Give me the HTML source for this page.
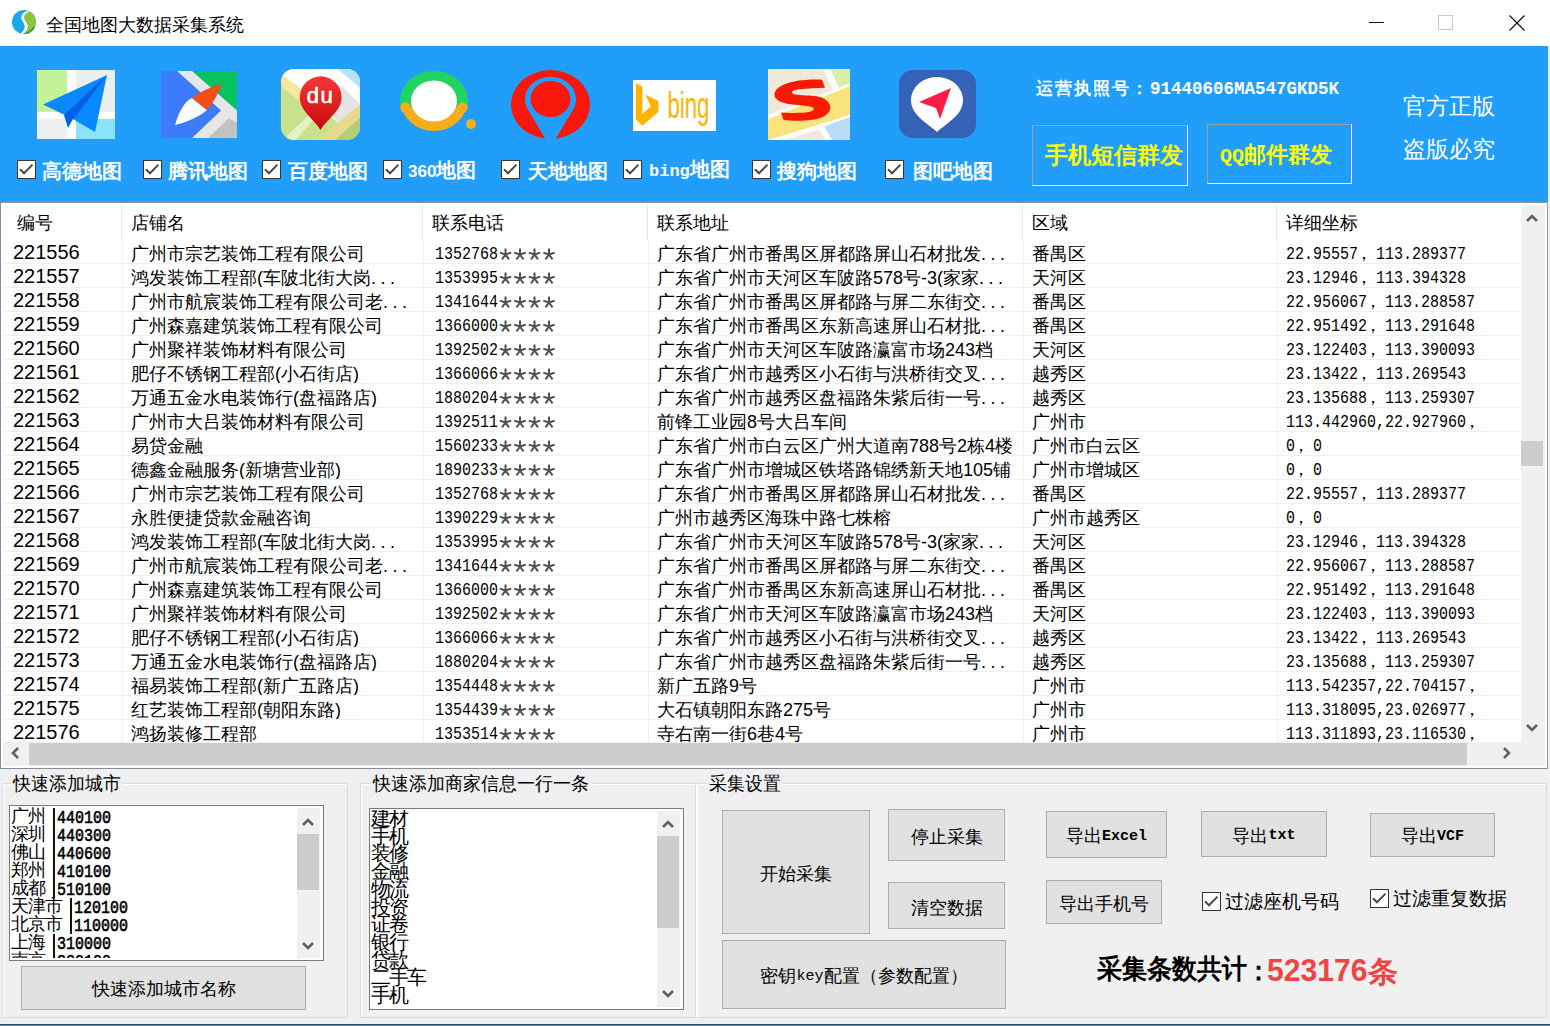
<!DOCTYPE html><html><head><meta charset="utf-8"><style>
*{margin:0;padding:0;box-sizing:content-box}
html,body{width:1550px;height:1026px;overflow:hidden;background:#f0f0f0}
body{position:relative;font-family:"Liberation Sans",sans-serif;color:#000}
.a{position:absolute;white-space:nowrap}
.cb{position:absolute}
.cb svg{position:absolute;left:0;top:0}
.lbl{position:absolute;white-space:nowrap;color:#fff;font-weight:bold;font-size:20px;line-height:22px}
.btn{position:absolute;background:#e1e1e1;border:1px solid #adadad;box-sizing:border-box;display:flex;align-items:center;justify-content:center;font-size:18px;white-space:nowrap}
.gb{position:absolute;border:1px solid #dcdcdc;box-sizing:border-box;box-shadow:inset 1px 1px 0 #fff}
.gbl{position:absolute;background:#f0f0f0;font-size:18px;line-height:20px;transform:scaleY(1.06);transform-origin:0 100%;padding:0 2px;white-space:nowrap}
.cell{position:absolute;white-space:nowrap;font-size:18px;line-height:24px;height:24px;overflow:hidden}
.mono{font-family:"Liberation Mono",monospace}
.mn{font-family:"Liberation Mono",monospace;font-size:15px;display:inline-block;transform:scaleY(1.2);transform-origin:50% 60%}
</style></head><body>
<div class="a" style="left:0;top:0;width:1550px;height:46px;background:#fff"></div>
<svg class="a" style="left:11px;top:9px" width="26" height="26" viewBox="0 0 26 26">
<defs><clipPath id="cc"><circle cx="13" cy="13" r="12"/></clipPath></defs>
<g clip-path="url(#cc)"><rect x="0" y="0" width="26" height="26" fill="#17a9e6"/>
<path d="M13 0 L26 0 L26 26 L8 26 C16 22 17 18 14 14 C11 10 12 4 18 1 Z" fill="#8bc53f"/>
<path d="M16 2 C10 4 9 9 12 13 C15 17 14 21 9 25 L12 25 C17 21 18 17 15 13 C12 9 12 5 19 2 Z" fill="#fff"/>
<path d="M9 25.5 C14 25 20 22 23 17 L26 26 Z" fill="#2e9a3c"/></g></svg>
<div class="a" style="left:46px;top:13px;font-size:18px;line-height:24px">全国地图大数据采集系统</div>
<div class="a" style="left:1369px;top:22px;width:15px;height:1px;background:#111"></div>
<div class="a" style="left:1438px;top:15px;width:13px;height:13px;border:1px solid #c8c8c8"></div>
<svg class="a" style="left:1509px;top:15px" width="16" height="16" viewBox="0 0 16 16"><path d="M0.5 0.5 L15.5 15.5 M15.5 0.5 L0.5 15.5" stroke="#111" stroke-width="1.2"/></svg>
<div class="a" style="left:0;top:46px;width:1548px;height:156px;background:#219efa"></div>
<div class="a" style="left:1548px;top:46px;width:2px;height:156px;background:#e8e8e8"></div>
<svg class="a" style="left:37px;top:70px" width="78" height="69" viewBox="0 0 78 69">
<rect width="78" height="69" fill="#e9eff0"/>
<rect x="0" y="0" width="30" height="42" fill="#c4f299"/>
<rect x="30" y="0" width="9" height="69" fill="#fbfdfd"/>
<rect x="0" y="42" width="78" height="7" fill="#fbfdfd"/>
<rect x="39" y="49" width="39" height="20" fill="#89e3fd"/>
<rect x="0" y="49" width="30" height="20" fill="#edf1f2"/>
<polygon points="6,34.5 70,5 58,62 36,49" fill="#0a88ff"/>
<polygon points="27,45 70,5 36,49 31,58" fill="#0660e6"/>
<polygon points="36,49 70,5 40,46" fill="#0a72f5"/>
</svg>
<svg class="a" style="left:161px;top:71px" width="76" height="67" viewBox="0 0 76 67">
<rect width="76" height="67" fill="#3c7cfb"/>
<polygon points="31,0 76,0 76,39.4" fill="#07c35f"/>
<polygon points="16,0 31,0 76,39.4 76,67 31,67 60,39.4" fill="#e6e6e6"/>
<polygon points="47,67 67.8,47.2 76,51.5 76,67" fill="#c2c2c2"/>
<path d="M14,54 C18,40 24,30 31,27 L46,39 C38,46 26,51 14,54 Z" fill="#fff"/>
<path d="M31,27 C40,20 52,15 61,13 C56,24 52,33 46,39 Z" fill="#f54d17"/>
</svg>
<svg class="a" style="left:281px;top:69px" width="79" height="71" viewBox="0 0 79 71">
<defs><clipPath id="bd"><rect width="79" height="71" rx="13"/></clipPath>
<linearGradient id="pin" x1="0" y1="0" x2="0" y2="1"><stop offset="0" stop-color="#f5373a"/><stop offset="1" stop-color="#c90a0a"/></linearGradient></defs>
<g clip-path="url(#bd)">
<rect width="79" height="71" fill="#c7e28b"/>
<polygon points="0,0 79,0 79,36 57,54 48.5,46.3 48.5,40.8 1.9,6.8 0,6.8" fill="#fff"/>
<polygon points="57,0 79,0 79,18.7" fill="#b4e3f9"/>
<polygon points="61,17 79,35.3 57.1,53.8 43,36" fill="#e4e4e4"/>
<polygon points="0,6.8 1.9,6.8 48.5,40.8 33.5,45.5 0,17.1" fill="#f5e79b"/>
<polygon points="79,35.3 79,48.7 54,71 37,71 57.1,53.8" fill="#e9d98b"/>
<polygon points="79,48.7 79,71 54,71" fill="#b2ce7b"/>
<polygon points="6.6,66 28,46.3 31.9,51.8 14.5,71 6,71" fill="#e2f1c6"/>
</g>
<path d="M39.5,61 C33,50 18.8,42 18.8,28.2 A20.9,20.9 0 0 1 60.6,28.2 C60.6,42 46,50 39.5,61 Z" fill="url(#pin)"/>
<text x="39.5" y="34" text-anchor="middle" font-family="Liberation Sans" font-size="22" letter-spacing="1.5" fill="#fff" stroke="#fff" stroke-width="0.6">du</text>
</svg>
<svg class="a" style="left:398px;top:69px" width="82" height="66" viewBox="0 0 82 66">
<defs><clipPath id="top"><rect x="0" y="0" width="82" height="38"/></clipPath><clipPath id="bot"><rect x="0" y="38" width="82" height="40"/></clipPath></defs>
<ellipse cx="36" cy="32" rx="34" ry="30" fill="#21d35f" clip-path="url(#top)"/>
<ellipse cx="36" cy="32" rx="33" ry="30" fill="#f5ad1a" clip-path="url(#bot)"/>
<circle cx="7.5" cy="38.5" r="5.2" fill="#f5ad1a"/>
<circle cx="64.5" cy="38.5" r="5.2" fill="#f5ad1a"/>
<ellipse cx="36" cy="32" rx="23" ry="20.5" fill="#fff"/>
<circle cx="73" cy="55" r="5" fill="#f5ad1a"/>
</svg>
<svg class="a" style="left:511px;top:70px" width="80" height="70" viewBox="0 0 80 70">
<ellipse cx="39.5" cy="34.5" rx="39.5" ry="34.5" fill="#f8170a"/>
<path d="M35,70 L16,38 A25.5,22.5 0 1 1 63,38 L44,70 Z" fill="#219efa"/>
<ellipse cx="39.5" cy="29" rx="20" ry="18" fill="#f8170a"/>
</svg>
<svg class="a" style="left:633px;top:80px" width="83" height="51" viewBox="0 0 83 51">
<rect width="83" height="51" fill="#fff"/>
<polygon points="2.8,3.1 9.3,6.5 9.3,34.1 17.8,26.3 12.4,14.7 25.5,20.9 25.5,31.8 9.3,45.7 2.8,39.5" fill="#ffb400"/>
<text x="34.5" y="38.5" font-family="Liberation Sans" font-size="37" fill="#ffb400" transform="translate(34.5 0) scale(0.6 1) translate(-34.5 0)">bing</text>
</svg>
<svg class="a" style="left:768px;top:69px" width="82" height="71" viewBox="0 0 82 71">
<rect width="82" height="71" fill="#efe9d9"/>
<polygon points="58,0 82,0 82,16 70,22" fill="#d7eeae"/>
<polygon points="0,50 82,17 82,46 0,71" fill="#f9e47c"/>
<polygon points="0,50 82,17 82,14 0,46" fill="#fff"/>
<polygon points="0,71 82,46 82,50 18,71" fill="#fff"/>
<polygon points="55,0 62,0 72,20 66,23" fill="#fff"/>
<polygon points="52,59 82,48 82,71 62,71" fill="#bbdcf6"/>
<polygon points="50,59 56,57 64,71 58,71" fill="#fff"/>
<path d="M54,10.8 C36,9.5 13,13 7.5,22 C3,31 14,35 30,36 C44,37 50,39 43,42.5 C35,44.5 20,44 13,43.5 L15.5,50.8 C28,53 50,52 58,46 C65,41 64,32 52,28 C44,26 32,26.5 27,25.5 C22,24 23,21 31,20.2 C40,19.5 50,19 57,18.7 Z" fill="#f81a06"/>
</svg>
<svg class="a" style="left:899px;top:70px" width="77" height="68" viewBox="0 0 77 68">
<rect width="77" height="68" rx="14" fill="#3462b6"/>
<path d="M38,62 C30,54 12,46 12,30 A26,23 0 0 1 64,30 C64,46 46,54 38,62 Z" fill="#fff"/>
<polygon points="20,32 52,18 41,49 37,38" fill="#fe1b48"/>
</svg>
<div class="cb" style="left:17px;top:160px;width:19px;height:19px;box-sizing:border-box;border:1.5px solid #363636;background:#fff"></div><svg class="a" style="left:17px;top:160px" width="19" height="19" viewBox="0 0 19 19"><path d="M3 9.2 L7 13.3 L15.5 4.6" fill="none" stroke="#4a4a4a" stroke-width="2"/></svg>
<div class="lbl" style="left:42px;top:160px">高德地图</div>
<div class="cb" style="left:143px;top:160px;width:19px;height:19px;box-sizing:border-box;border:1.5px solid #363636;background:#fff"></div><svg class="a" style="left:143px;top:160px" width="19" height="19" viewBox="0 0 19 19"><path d="M3 9.2 L7 13.3 L15.5 4.6" fill="none" stroke="#4a4a4a" stroke-width="2"/></svg>
<div class="lbl" style="left:168px;top:160px">腾讯地图</div>
<div class="cb" style="left:262px;top:160px;width:19px;height:19px;box-sizing:border-box;border:1.5px solid #363636;background:#fff"></div><svg class="a" style="left:262px;top:160px" width="19" height="19" viewBox="0 0 19 19"><path d="M3 9.2 L7 13.3 L15.5 4.6" fill="none" stroke="#4a4a4a" stroke-width="2"/></svg>
<div class="lbl" style="left:288px;top:160px">百度地图</div>
<div class="cb" style="left:383px;top:160px;width:19px;height:19px;box-sizing:border-box;border:1.5px solid #363636;background:#fff"></div><svg class="a" style="left:383px;top:160px" width="19" height="19" viewBox="0 0 19 19"><path d="M3 9.2 L7 13.3 L15.5 4.6" fill="none" stroke="#4a4a4a" stroke-width="2"/></svg>
<div class="lbl" style="left:408px;top:159px"><span style="font-size:17px">360</span>地图</div>
<div class="cb" style="left:501px;top:160px;width:19px;height:19px;box-sizing:border-box;border:1.5px solid #363636;background:#fff"></div><svg class="a" style="left:501px;top:160px" width="19" height="19" viewBox="0 0 19 19"><path d="M3 9.2 L7 13.3 L15.5 4.6" fill="none" stroke="#4a4a4a" stroke-width="2"/></svg>
<div class="lbl" style="left:528px;top:160px">天地地图</div>
<div class="cb" style="left:623px;top:160px;width:19px;height:19px;box-sizing:border-box;border:1.5px solid #363636;background:#fff"></div><svg class="a" style="left:623px;top:160px" width="19" height="19" viewBox="0 0 19 19"><path d="M3 9.2 L7 13.3 L15.5 4.6" fill="none" stroke="#4a4a4a" stroke-width="2"/></svg>
<div class="lbl" style="left:649px;top:158px"><span class="mono" style="font-size:17px">bing</span>地图</div>
<div class="cb" style="left:752px;top:160px;width:19px;height:19px;box-sizing:border-box;border:1.5px solid #363636;background:#fff"></div><svg class="a" style="left:752px;top:160px" width="19" height="19" viewBox="0 0 19 19"><path d="M3 9.2 L7 13.3 L15.5 4.6" fill="none" stroke="#4a4a4a" stroke-width="2"/></svg>
<div class="lbl" style="left:777px;top:160px">搜狗地图</div>
<div class="cb" style="left:885px;top:160px;width:19px;height:19px;box-sizing:border-box;border:1.5px solid #363636;background:#fff"></div><svg class="a" style="left:885px;top:160px" width="19" height="19" viewBox="0 0 19 19"><path d="M3 9.2 L7 13.3 L15.5 4.6" fill="none" stroke="#4a4a4a" stroke-width="2"/></svg>
<div class="lbl" style="left:913px;top:160px">图吧地图</div>
<div class="a" style="left:1036px;top:78px;color:#fff;font-weight:bold;font-size:17px;line-height:22px;letter-spacing:2px">运营执照号：<span class="mono" style="font-size:17.5px;letter-spacing:0">91440606MA547GKD5K</span></div>
<div class="a" style="left:1032px;top:125px;width:156px;height:61px;border-top:1.5px solid #a0a0a0;border-left:1.5px solid #a0a0a0;border-right:1.5px solid #fff;border-bottom:1.5px solid #fff;box-sizing:border-box"></div>
<div class="a" style="left:1045px;top:142px;color:#ffff00;font-weight:bold;font-size:22.5px;line-height:28px">手机短信群发</div>
<div class="a" style="left:1207px;top:124px;width:145px;height:60px;border-top:1.5px solid #a0a0a0;border-left:1.5px solid #a0a0a0;border-right:1.5px solid #fff;border-bottom:1.5px solid #fff;box-sizing:border-box"></div>
<div class="a" style="left:1220px;top:141px;color:#ffff00;font-weight:bold;font-size:22px;line-height:28px"><span class="mono" style="font-size:20px">QQ</span>邮件群发</div>
<div class="a" style="left:1403px;top:92px;color:#fff;font-size:23px;line-height:28px">官方正版</div>
<div class="a" style="left:1403px;top:135px;color:#fff;font-size:23px;line-height:28px">盗版必究</div>
<div class="a" style="left:0;top:202px;width:1548px;height:567px;background:#fff;border-top:1px solid #8f96a0;border-left:1.5px solid #858c97;border-right:1.5px solid #8f96a0;border-bottom:1.5px solid #858c97;box-sizing:border-box"></div>
<div class="cell" style="left:17px;top:211px">编号</div>
<div class="cell" style="left:131px;top:211px">店铺名</div>
<div class="cell" style="left:432px;top:211px">联系电话</div>
<div class="cell" style="left:657px;top:211px">联系地址</div>
<div class="cell" style="left:1032px;top:211px">区域</div>
<div class="cell" style="left:1286px;top:211px">详细坐标</div>
<div class="a" style="left:121px;top:205px;width:1px;height:35px;background:#e5e5e5"></div>
<div class="a" style="left:422px;top:205px;width:1px;height:35px;background:#e5e5e5"></div>
<div class="a" style="left:647px;top:205px;width:1px;height:35px;background:#e5e5e5"></div>
<div class="a" style="left:1022px;top:205px;width:1px;height:35px;background:#e5e5e5"></div>
<div class="a" style="left:1276px;top:205px;width:1px;height:35px;background:#e5e5e5"></div>
<div class="cell" style="left:13px;top:240px;font-size:20px;height:24px">221556</div>
<div class="cell" style="left:131px;top:242px;height:22px">广州市宗艺装饰工程有限公司</div>
<div class="cell" style="left:435px;top:241px;width:130px;height:23px"><span class="mn">1352768</span><svg style="position:absolute;left:64px;top:7px" width="58" height="14" viewBox="0 0 58 14"><path d="M6.5 6.5L6.5 0.5 M6.5 6.5L12.2 4.6 M6.5 6.5L10.0 11.4 M6.5 6.5L3.0 11.4 M6.5 6.5L0.8 4.6 M21.0 6.5L21.0 0.5 M21.0 6.5L26.7 4.6 M21.0 6.5L24.5 11.4 M21.0 6.5L17.5 11.4 M21.0 6.5L15.3 4.6 M35.5 6.5L35.5 0.5 M35.5 6.5L41.2 4.6 M35.5 6.5L39.0 11.4 M35.5 6.5L32.0 11.4 M35.5 6.5L29.8 4.6 M50.0 6.5L50.0 0.5 M50.0 6.5L55.7 4.6 M50.0 6.5L53.5 11.4 M50.0 6.5L46.5 11.4 M50.0 6.5L44.3 4.6" stroke="#505050" stroke-width="2" fill="none"/></svg></div>
<div class="cell" style="left:657px;top:242px;height:22px">广东省广州市番禺区屏都路屏山石材批发<span style="letter-spacing:4.5px">...</span></div>
<div class="cell" style="left:1032px;top:242px;height:22px">番禺区</div>
<div class="cell" style="left:1286px;top:241px;height:23px"><span class="mn">22.95557</span><span style="position:relative;left:-3px">，</span><span class="mn">113.289377</span></div>
<div class="a" style="left:3px;top:263px;width:1516px;height:1px;background:#f0f0f0"></div>
<div class="cell" style="left:13px;top:264px;font-size:20px;height:24px">221557</div>
<div class="cell" style="left:131px;top:266px;height:22px">鸿发装饰工程部(车陂北街大岗<span style="letter-spacing:4.5px">...</span></div>
<div class="cell" style="left:435px;top:265px;width:130px;height:23px"><span class="mn">1353995</span><svg style="position:absolute;left:64px;top:7px" width="58" height="14" viewBox="0 0 58 14"><path d="M6.5 6.5L6.5 0.5 M6.5 6.5L12.2 4.6 M6.5 6.5L10.0 11.4 M6.5 6.5L3.0 11.4 M6.5 6.5L0.8 4.6 M21.0 6.5L21.0 0.5 M21.0 6.5L26.7 4.6 M21.0 6.5L24.5 11.4 M21.0 6.5L17.5 11.4 M21.0 6.5L15.3 4.6 M35.5 6.5L35.5 0.5 M35.5 6.5L41.2 4.6 M35.5 6.5L39.0 11.4 M35.5 6.5L32.0 11.4 M35.5 6.5L29.8 4.6 M50.0 6.5L50.0 0.5 M50.0 6.5L55.7 4.6 M50.0 6.5L53.5 11.4 M50.0 6.5L46.5 11.4 M50.0 6.5L44.3 4.6" stroke="#505050" stroke-width="2" fill="none"/></svg></div>
<div class="cell" style="left:657px;top:266px;height:22px">广东省广州市天河区车陂路578号-3(家家<span style="letter-spacing:4.5px">...</span></div>
<div class="cell" style="left:1032px;top:266px;height:22px">天河区</div>
<div class="cell" style="left:1286px;top:265px;height:23px"><span class="mn">23.12946</span><span style="position:relative;left:-3px">，</span><span class="mn">113.394328</span></div>
<div class="a" style="left:3px;top:287px;width:1516px;height:1px;background:#f0f0f0"></div>
<div class="cell" style="left:13px;top:288px;font-size:20px;height:24px">221558</div>
<div class="cell" style="left:131px;top:290px;height:22px">广州市航宸装饰工程有限公司老<span style="letter-spacing:4.5px">...</span></div>
<div class="cell" style="left:435px;top:289px;width:130px;height:23px"><span class="mn">1341644</span><svg style="position:absolute;left:64px;top:7px" width="58" height="14" viewBox="0 0 58 14"><path d="M6.5 6.5L6.5 0.5 M6.5 6.5L12.2 4.6 M6.5 6.5L10.0 11.4 M6.5 6.5L3.0 11.4 M6.5 6.5L0.8 4.6 M21.0 6.5L21.0 0.5 M21.0 6.5L26.7 4.6 M21.0 6.5L24.5 11.4 M21.0 6.5L17.5 11.4 M21.0 6.5L15.3 4.6 M35.5 6.5L35.5 0.5 M35.5 6.5L41.2 4.6 M35.5 6.5L39.0 11.4 M35.5 6.5L32.0 11.4 M35.5 6.5L29.8 4.6 M50.0 6.5L50.0 0.5 M50.0 6.5L55.7 4.6 M50.0 6.5L53.5 11.4 M50.0 6.5L46.5 11.4 M50.0 6.5L44.3 4.6" stroke="#505050" stroke-width="2" fill="none"/></svg></div>
<div class="cell" style="left:657px;top:290px;height:22px">广东省广州市番禺区屏都路与屏二东街交<span style="letter-spacing:4.5px">...</span></div>
<div class="cell" style="left:1032px;top:290px;height:22px">番禺区</div>
<div class="cell" style="left:1286px;top:289px;height:23px"><span class="mn">22.956067</span><span style="position:relative;left:-3px">，</span><span class="mn">113.288587</span></div>
<div class="a" style="left:3px;top:311px;width:1516px;height:1px;background:#f0f0f0"></div>
<div class="cell" style="left:13px;top:312px;font-size:20px;height:24px">221559</div>
<div class="cell" style="left:131px;top:314px;height:22px">广州森嘉建筑装饰工程有限公司</div>
<div class="cell" style="left:435px;top:313px;width:130px;height:23px"><span class="mn">1366000</span><svg style="position:absolute;left:64px;top:7px" width="58" height="14" viewBox="0 0 58 14"><path d="M6.5 6.5L6.5 0.5 M6.5 6.5L12.2 4.6 M6.5 6.5L10.0 11.4 M6.5 6.5L3.0 11.4 M6.5 6.5L0.8 4.6 M21.0 6.5L21.0 0.5 M21.0 6.5L26.7 4.6 M21.0 6.5L24.5 11.4 M21.0 6.5L17.5 11.4 M21.0 6.5L15.3 4.6 M35.5 6.5L35.5 0.5 M35.5 6.5L41.2 4.6 M35.5 6.5L39.0 11.4 M35.5 6.5L32.0 11.4 M35.5 6.5L29.8 4.6 M50.0 6.5L50.0 0.5 M50.0 6.5L55.7 4.6 M50.0 6.5L53.5 11.4 M50.0 6.5L46.5 11.4 M50.0 6.5L44.3 4.6" stroke="#505050" stroke-width="2" fill="none"/></svg></div>
<div class="cell" style="left:657px;top:314px;height:22px">广东省广州市番禺区东新高速屏山石材批<span style="letter-spacing:4.5px">...</span></div>
<div class="cell" style="left:1032px;top:314px;height:22px">番禺区</div>
<div class="cell" style="left:1286px;top:313px;height:23px"><span class="mn">22.951492</span><span style="position:relative;left:-3px">，</span><span class="mn">113.291648</span></div>
<div class="a" style="left:3px;top:335px;width:1516px;height:1px;background:#f0f0f0"></div>
<div class="cell" style="left:13px;top:336px;font-size:20px;height:24px">221560</div>
<div class="cell" style="left:131px;top:338px;height:22px">广州聚祥装饰材料有限公司</div>
<div class="cell" style="left:435px;top:337px;width:130px;height:23px"><span class="mn">1392502</span><svg style="position:absolute;left:64px;top:7px" width="58" height="14" viewBox="0 0 58 14"><path d="M6.5 6.5L6.5 0.5 M6.5 6.5L12.2 4.6 M6.5 6.5L10.0 11.4 M6.5 6.5L3.0 11.4 M6.5 6.5L0.8 4.6 M21.0 6.5L21.0 0.5 M21.0 6.5L26.7 4.6 M21.0 6.5L24.5 11.4 M21.0 6.5L17.5 11.4 M21.0 6.5L15.3 4.6 M35.5 6.5L35.5 0.5 M35.5 6.5L41.2 4.6 M35.5 6.5L39.0 11.4 M35.5 6.5L32.0 11.4 M35.5 6.5L29.8 4.6 M50.0 6.5L50.0 0.5 M50.0 6.5L55.7 4.6 M50.0 6.5L53.5 11.4 M50.0 6.5L46.5 11.4 M50.0 6.5L44.3 4.6" stroke="#505050" stroke-width="2" fill="none"/></svg></div>
<div class="cell" style="left:657px;top:338px;height:22px">广东省广州市天河区车陂路瀛富市场243档</div>
<div class="cell" style="left:1032px;top:338px;height:22px">天河区</div>
<div class="cell" style="left:1286px;top:337px;height:23px"><span class="mn">23.122403</span><span style="position:relative;left:-3px">，</span><span class="mn">113.390093</span></div>
<div class="a" style="left:3px;top:359px;width:1516px;height:1px;background:#f0f0f0"></div>
<div class="cell" style="left:13px;top:360px;font-size:20px;height:24px">221561</div>
<div class="cell" style="left:131px;top:362px;height:22px">肥仔不锈钢工程部(小石街店)</div>
<div class="cell" style="left:435px;top:361px;width:130px;height:23px"><span class="mn">1366066</span><svg style="position:absolute;left:64px;top:7px" width="58" height="14" viewBox="0 0 58 14"><path d="M6.5 6.5L6.5 0.5 M6.5 6.5L12.2 4.6 M6.5 6.5L10.0 11.4 M6.5 6.5L3.0 11.4 M6.5 6.5L0.8 4.6 M21.0 6.5L21.0 0.5 M21.0 6.5L26.7 4.6 M21.0 6.5L24.5 11.4 M21.0 6.5L17.5 11.4 M21.0 6.5L15.3 4.6 M35.5 6.5L35.5 0.5 M35.5 6.5L41.2 4.6 M35.5 6.5L39.0 11.4 M35.5 6.5L32.0 11.4 M35.5 6.5L29.8 4.6 M50.0 6.5L50.0 0.5 M50.0 6.5L55.7 4.6 M50.0 6.5L53.5 11.4 M50.0 6.5L46.5 11.4 M50.0 6.5L44.3 4.6" stroke="#505050" stroke-width="2" fill="none"/></svg></div>
<div class="cell" style="left:657px;top:362px;height:22px">广东省广州市越秀区小石街与洪桥街交叉<span style="letter-spacing:4.5px">...</span></div>
<div class="cell" style="left:1032px;top:362px;height:22px">越秀区</div>
<div class="cell" style="left:1286px;top:361px;height:23px"><span class="mn">23.13422</span><span style="position:relative;left:-3px">，</span><span class="mn">113.269543</span></div>
<div class="a" style="left:3px;top:383px;width:1516px;height:1px;background:#f0f0f0"></div>
<div class="cell" style="left:13px;top:384px;font-size:20px;height:24px">221562</div>
<div class="cell" style="left:131px;top:386px;height:22px">万通五金水电装饰行(盘福路店)</div>
<div class="cell" style="left:435px;top:385px;width:130px;height:23px"><span class="mn">1880204</span><svg style="position:absolute;left:64px;top:7px" width="58" height="14" viewBox="0 0 58 14"><path d="M6.5 6.5L6.5 0.5 M6.5 6.5L12.2 4.6 M6.5 6.5L10.0 11.4 M6.5 6.5L3.0 11.4 M6.5 6.5L0.8 4.6 M21.0 6.5L21.0 0.5 M21.0 6.5L26.7 4.6 M21.0 6.5L24.5 11.4 M21.0 6.5L17.5 11.4 M21.0 6.5L15.3 4.6 M35.5 6.5L35.5 0.5 M35.5 6.5L41.2 4.6 M35.5 6.5L39.0 11.4 M35.5 6.5L32.0 11.4 M35.5 6.5L29.8 4.6 M50.0 6.5L50.0 0.5 M50.0 6.5L55.7 4.6 M50.0 6.5L53.5 11.4 M50.0 6.5L46.5 11.4 M50.0 6.5L44.3 4.6" stroke="#505050" stroke-width="2" fill="none"/></svg></div>
<div class="cell" style="left:657px;top:386px;height:22px">广东省广州市越秀区盘福路朱紫后街一号<span style="letter-spacing:4.5px">...</span></div>
<div class="cell" style="left:1032px;top:386px;height:22px">越秀区</div>
<div class="cell" style="left:1286px;top:385px;height:23px"><span class="mn">23.135688</span><span style="position:relative;left:-3px">，</span><span class="mn">113.259307</span></div>
<div class="a" style="left:3px;top:407px;width:1516px;height:1px;background:#f0f0f0"></div>
<div class="cell" style="left:13px;top:408px;font-size:20px;height:24px">221563</div>
<div class="cell" style="left:131px;top:410px;height:22px">广州市大吕装饰材料有限公司</div>
<div class="cell" style="left:435px;top:409px;width:130px;height:23px"><span class="mn">1392511</span><svg style="position:absolute;left:64px;top:7px" width="58" height="14" viewBox="0 0 58 14"><path d="M6.5 6.5L6.5 0.5 M6.5 6.5L12.2 4.6 M6.5 6.5L10.0 11.4 M6.5 6.5L3.0 11.4 M6.5 6.5L0.8 4.6 M21.0 6.5L21.0 0.5 M21.0 6.5L26.7 4.6 M21.0 6.5L24.5 11.4 M21.0 6.5L17.5 11.4 M21.0 6.5L15.3 4.6 M35.5 6.5L35.5 0.5 M35.5 6.5L41.2 4.6 M35.5 6.5L39.0 11.4 M35.5 6.5L32.0 11.4 M35.5 6.5L29.8 4.6 M50.0 6.5L50.0 0.5 M50.0 6.5L55.7 4.6 M50.0 6.5L53.5 11.4 M50.0 6.5L46.5 11.4 M50.0 6.5L44.3 4.6" stroke="#505050" stroke-width="2" fill="none"/></svg></div>
<div class="cell" style="left:657px;top:410px;height:22px">前锋工业园8号大吕车间</div>
<div class="cell" style="left:1032px;top:410px;height:22px">广州市</div>
<div class="cell" style="left:1286px;top:409px;height:23px"><span class="mn">113.442960,22.927960</span><span style="position:relative;left:-3px">，</span></div>
<div class="a" style="left:3px;top:431px;width:1516px;height:1px;background:#f0f0f0"></div>
<div class="cell" style="left:13px;top:432px;font-size:20px;height:24px">221564</div>
<div class="cell" style="left:131px;top:434px;height:22px">易贷金融</div>
<div class="cell" style="left:435px;top:433px;width:130px;height:23px"><span class="mn">1560233</span><svg style="position:absolute;left:64px;top:7px" width="58" height="14" viewBox="0 0 58 14"><path d="M6.5 6.5L6.5 0.5 M6.5 6.5L12.2 4.6 M6.5 6.5L10.0 11.4 M6.5 6.5L3.0 11.4 M6.5 6.5L0.8 4.6 M21.0 6.5L21.0 0.5 M21.0 6.5L26.7 4.6 M21.0 6.5L24.5 11.4 M21.0 6.5L17.5 11.4 M21.0 6.5L15.3 4.6 M35.5 6.5L35.5 0.5 M35.5 6.5L41.2 4.6 M35.5 6.5L39.0 11.4 M35.5 6.5L32.0 11.4 M35.5 6.5L29.8 4.6 M50.0 6.5L50.0 0.5 M50.0 6.5L55.7 4.6 M50.0 6.5L53.5 11.4 M50.0 6.5L46.5 11.4 M50.0 6.5L44.3 4.6" stroke="#505050" stroke-width="2" fill="none"/></svg></div>
<div class="cell" style="left:657px;top:434px;height:22px">广东省广州市白云区广州大道南788号2栋4楼</div>
<div class="cell" style="left:1032px;top:434px;height:22px">广州市白云区</div>
<div class="cell" style="left:1286px;top:433px;height:23px"><span class="mn">0</span><span style="position:relative;left:-3px">，</span><span class="mn">0</span></div>
<div class="a" style="left:3px;top:455px;width:1516px;height:1px;background:#f0f0f0"></div>
<div class="cell" style="left:13px;top:456px;font-size:20px;height:24px">221565</div>
<div class="cell" style="left:131px;top:458px;height:22px">德鑫金融服务(新塘营业部)</div>
<div class="cell" style="left:435px;top:457px;width:130px;height:23px"><span class="mn">1890233</span><svg style="position:absolute;left:64px;top:7px" width="58" height="14" viewBox="0 0 58 14"><path d="M6.5 6.5L6.5 0.5 M6.5 6.5L12.2 4.6 M6.5 6.5L10.0 11.4 M6.5 6.5L3.0 11.4 M6.5 6.5L0.8 4.6 M21.0 6.5L21.0 0.5 M21.0 6.5L26.7 4.6 M21.0 6.5L24.5 11.4 M21.0 6.5L17.5 11.4 M21.0 6.5L15.3 4.6 M35.5 6.5L35.5 0.5 M35.5 6.5L41.2 4.6 M35.5 6.5L39.0 11.4 M35.5 6.5L32.0 11.4 M35.5 6.5L29.8 4.6 M50.0 6.5L50.0 0.5 M50.0 6.5L55.7 4.6 M50.0 6.5L53.5 11.4 M50.0 6.5L46.5 11.4 M50.0 6.5L44.3 4.6" stroke="#505050" stroke-width="2" fill="none"/></svg></div>
<div class="cell" style="left:657px;top:458px;height:22px">广东省广州市增城区铁塔路锦绣新天地105铺</div>
<div class="cell" style="left:1032px;top:458px;height:22px">广州市增城区</div>
<div class="cell" style="left:1286px;top:457px;height:23px"><span class="mn">0</span><span style="position:relative;left:-3px">，</span><span class="mn">0</span></div>
<div class="a" style="left:3px;top:479px;width:1516px;height:1px;background:#f0f0f0"></div>
<div class="cell" style="left:13px;top:480px;font-size:20px;height:24px">221566</div>
<div class="cell" style="left:131px;top:482px;height:22px">广州市宗艺装饰工程有限公司</div>
<div class="cell" style="left:435px;top:481px;width:130px;height:23px"><span class="mn">1352768</span><svg style="position:absolute;left:64px;top:7px" width="58" height="14" viewBox="0 0 58 14"><path d="M6.5 6.5L6.5 0.5 M6.5 6.5L12.2 4.6 M6.5 6.5L10.0 11.4 M6.5 6.5L3.0 11.4 M6.5 6.5L0.8 4.6 M21.0 6.5L21.0 0.5 M21.0 6.5L26.7 4.6 M21.0 6.5L24.5 11.4 M21.0 6.5L17.5 11.4 M21.0 6.5L15.3 4.6 M35.5 6.5L35.5 0.5 M35.5 6.5L41.2 4.6 M35.5 6.5L39.0 11.4 M35.5 6.5L32.0 11.4 M35.5 6.5L29.8 4.6 M50.0 6.5L50.0 0.5 M50.0 6.5L55.7 4.6 M50.0 6.5L53.5 11.4 M50.0 6.5L46.5 11.4 M50.0 6.5L44.3 4.6" stroke="#505050" stroke-width="2" fill="none"/></svg></div>
<div class="cell" style="left:657px;top:482px;height:22px">广东省广州市番禺区屏都路屏山石材批发<span style="letter-spacing:4.5px">...</span></div>
<div class="cell" style="left:1032px;top:482px;height:22px">番禺区</div>
<div class="cell" style="left:1286px;top:481px;height:23px"><span class="mn">22.95557</span><span style="position:relative;left:-3px">，</span><span class="mn">113.289377</span></div>
<div class="a" style="left:3px;top:503px;width:1516px;height:1px;background:#f0f0f0"></div>
<div class="cell" style="left:13px;top:504px;font-size:20px;height:24px">221567</div>
<div class="cell" style="left:131px;top:506px;height:22px">永胜便捷贷款金融咨询</div>
<div class="cell" style="left:435px;top:505px;width:130px;height:23px"><span class="mn">1390229</span><svg style="position:absolute;left:64px;top:7px" width="58" height="14" viewBox="0 0 58 14"><path d="M6.5 6.5L6.5 0.5 M6.5 6.5L12.2 4.6 M6.5 6.5L10.0 11.4 M6.5 6.5L3.0 11.4 M6.5 6.5L0.8 4.6 M21.0 6.5L21.0 0.5 M21.0 6.5L26.7 4.6 M21.0 6.5L24.5 11.4 M21.0 6.5L17.5 11.4 M21.0 6.5L15.3 4.6 M35.5 6.5L35.5 0.5 M35.5 6.5L41.2 4.6 M35.5 6.5L39.0 11.4 M35.5 6.5L32.0 11.4 M35.5 6.5L29.8 4.6 M50.0 6.5L50.0 0.5 M50.0 6.5L55.7 4.6 M50.0 6.5L53.5 11.4 M50.0 6.5L46.5 11.4 M50.0 6.5L44.3 4.6" stroke="#505050" stroke-width="2" fill="none"/></svg></div>
<div class="cell" style="left:657px;top:506px;height:22px">广州市越秀区海珠中路七株榕</div>
<div class="cell" style="left:1032px;top:506px;height:22px">广州市越秀区</div>
<div class="cell" style="left:1286px;top:505px;height:23px"><span class="mn">0</span><span style="position:relative;left:-3px">，</span><span class="mn">0</span></div>
<div class="a" style="left:3px;top:527px;width:1516px;height:1px;background:#f0f0f0"></div>
<div class="cell" style="left:13px;top:528px;font-size:20px;height:24px">221568</div>
<div class="cell" style="left:131px;top:530px;height:22px">鸿发装饰工程部(车陂北街大岗<span style="letter-spacing:4.5px">...</span></div>
<div class="cell" style="left:435px;top:529px;width:130px;height:23px"><span class="mn">1353995</span><svg style="position:absolute;left:64px;top:7px" width="58" height="14" viewBox="0 0 58 14"><path d="M6.5 6.5L6.5 0.5 M6.5 6.5L12.2 4.6 M6.5 6.5L10.0 11.4 M6.5 6.5L3.0 11.4 M6.5 6.5L0.8 4.6 M21.0 6.5L21.0 0.5 M21.0 6.5L26.7 4.6 M21.0 6.5L24.5 11.4 M21.0 6.5L17.5 11.4 M21.0 6.5L15.3 4.6 M35.5 6.5L35.5 0.5 M35.5 6.5L41.2 4.6 M35.5 6.5L39.0 11.4 M35.5 6.5L32.0 11.4 M35.5 6.5L29.8 4.6 M50.0 6.5L50.0 0.5 M50.0 6.5L55.7 4.6 M50.0 6.5L53.5 11.4 M50.0 6.5L46.5 11.4 M50.0 6.5L44.3 4.6" stroke="#505050" stroke-width="2" fill="none"/></svg></div>
<div class="cell" style="left:657px;top:530px;height:22px">广东省广州市天河区车陂路578号-3(家家<span style="letter-spacing:4.5px">...</span></div>
<div class="cell" style="left:1032px;top:530px;height:22px">天河区</div>
<div class="cell" style="left:1286px;top:529px;height:23px"><span class="mn">23.12946</span><span style="position:relative;left:-3px">，</span><span class="mn">113.394328</span></div>
<div class="a" style="left:3px;top:551px;width:1516px;height:1px;background:#f0f0f0"></div>
<div class="cell" style="left:13px;top:552px;font-size:20px;height:24px">221569</div>
<div class="cell" style="left:131px;top:554px;height:22px">广州市航宸装饰工程有限公司老<span style="letter-spacing:4.5px">...</span></div>
<div class="cell" style="left:435px;top:553px;width:130px;height:23px"><span class="mn">1341644</span><svg style="position:absolute;left:64px;top:7px" width="58" height="14" viewBox="0 0 58 14"><path d="M6.5 6.5L6.5 0.5 M6.5 6.5L12.2 4.6 M6.5 6.5L10.0 11.4 M6.5 6.5L3.0 11.4 M6.5 6.5L0.8 4.6 M21.0 6.5L21.0 0.5 M21.0 6.5L26.7 4.6 M21.0 6.5L24.5 11.4 M21.0 6.5L17.5 11.4 M21.0 6.5L15.3 4.6 M35.5 6.5L35.5 0.5 M35.5 6.5L41.2 4.6 M35.5 6.5L39.0 11.4 M35.5 6.5L32.0 11.4 M35.5 6.5L29.8 4.6 M50.0 6.5L50.0 0.5 M50.0 6.5L55.7 4.6 M50.0 6.5L53.5 11.4 M50.0 6.5L46.5 11.4 M50.0 6.5L44.3 4.6" stroke="#505050" stroke-width="2" fill="none"/></svg></div>
<div class="cell" style="left:657px;top:554px;height:22px">广东省广州市番禺区屏都路与屏二东街交<span style="letter-spacing:4.5px">...</span></div>
<div class="cell" style="left:1032px;top:554px;height:22px">番禺区</div>
<div class="cell" style="left:1286px;top:553px;height:23px"><span class="mn">22.956067</span><span style="position:relative;left:-3px">，</span><span class="mn">113.288587</span></div>
<div class="a" style="left:3px;top:575px;width:1516px;height:1px;background:#f0f0f0"></div>
<div class="cell" style="left:13px;top:576px;font-size:20px;height:24px">221570</div>
<div class="cell" style="left:131px;top:578px;height:22px">广州森嘉建筑装饰工程有限公司</div>
<div class="cell" style="left:435px;top:577px;width:130px;height:23px"><span class="mn">1366000</span><svg style="position:absolute;left:64px;top:7px" width="58" height="14" viewBox="0 0 58 14"><path d="M6.5 6.5L6.5 0.5 M6.5 6.5L12.2 4.6 M6.5 6.5L10.0 11.4 M6.5 6.5L3.0 11.4 M6.5 6.5L0.8 4.6 M21.0 6.5L21.0 0.5 M21.0 6.5L26.7 4.6 M21.0 6.5L24.5 11.4 M21.0 6.5L17.5 11.4 M21.0 6.5L15.3 4.6 M35.5 6.5L35.5 0.5 M35.5 6.5L41.2 4.6 M35.5 6.5L39.0 11.4 M35.5 6.5L32.0 11.4 M35.5 6.5L29.8 4.6 M50.0 6.5L50.0 0.5 M50.0 6.5L55.7 4.6 M50.0 6.5L53.5 11.4 M50.0 6.5L46.5 11.4 M50.0 6.5L44.3 4.6" stroke="#505050" stroke-width="2" fill="none"/></svg></div>
<div class="cell" style="left:657px;top:578px;height:22px">广东省广州市番禺区东新高速屏山石材批<span style="letter-spacing:4.5px">...</span></div>
<div class="cell" style="left:1032px;top:578px;height:22px">番禺区</div>
<div class="cell" style="left:1286px;top:577px;height:23px"><span class="mn">22.951492</span><span style="position:relative;left:-3px">，</span><span class="mn">113.291648</span></div>
<div class="a" style="left:3px;top:599px;width:1516px;height:1px;background:#f0f0f0"></div>
<div class="cell" style="left:13px;top:600px;font-size:20px;height:24px">221571</div>
<div class="cell" style="left:131px;top:602px;height:22px">广州聚祥装饰材料有限公司</div>
<div class="cell" style="left:435px;top:601px;width:130px;height:23px"><span class="mn">1392502</span><svg style="position:absolute;left:64px;top:7px" width="58" height="14" viewBox="0 0 58 14"><path d="M6.5 6.5L6.5 0.5 M6.5 6.5L12.2 4.6 M6.5 6.5L10.0 11.4 M6.5 6.5L3.0 11.4 M6.5 6.5L0.8 4.6 M21.0 6.5L21.0 0.5 M21.0 6.5L26.7 4.6 M21.0 6.5L24.5 11.4 M21.0 6.5L17.5 11.4 M21.0 6.5L15.3 4.6 M35.5 6.5L35.5 0.5 M35.5 6.5L41.2 4.6 M35.5 6.5L39.0 11.4 M35.5 6.5L32.0 11.4 M35.5 6.5L29.8 4.6 M50.0 6.5L50.0 0.5 M50.0 6.5L55.7 4.6 M50.0 6.5L53.5 11.4 M50.0 6.5L46.5 11.4 M50.0 6.5L44.3 4.6" stroke="#505050" stroke-width="2" fill="none"/></svg></div>
<div class="cell" style="left:657px;top:602px;height:22px">广东省广州市天河区车陂路瀛富市场243档</div>
<div class="cell" style="left:1032px;top:602px;height:22px">天河区</div>
<div class="cell" style="left:1286px;top:601px;height:23px"><span class="mn">23.122403</span><span style="position:relative;left:-3px">，</span><span class="mn">113.390093</span></div>
<div class="a" style="left:3px;top:623px;width:1516px;height:1px;background:#f0f0f0"></div>
<div class="cell" style="left:13px;top:624px;font-size:20px;height:24px">221572</div>
<div class="cell" style="left:131px;top:626px;height:22px">肥仔不锈钢工程部(小石街店)</div>
<div class="cell" style="left:435px;top:625px;width:130px;height:23px"><span class="mn">1366066</span><svg style="position:absolute;left:64px;top:7px" width="58" height="14" viewBox="0 0 58 14"><path d="M6.5 6.5L6.5 0.5 M6.5 6.5L12.2 4.6 M6.5 6.5L10.0 11.4 M6.5 6.5L3.0 11.4 M6.5 6.5L0.8 4.6 M21.0 6.5L21.0 0.5 M21.0 6.5L26.7 4.6 M21.0 6.5L24.5 11.4 M21.0 6.5L17.5 11.4 M21.0 6.5L15.3 4.6 M35.5 6.5L35.5 0.5 M35.5 6.5L41.2 4.6 M35.5 6.5L39.0 11.4 M35.5 6.5L32.0 11.4 M35.5 6.5L29.8 4.6 M50.0 6.5L50.0 0.5 M50.0 6.5L55.7 4.6 M50.0 6.5L53.5 11.4 M50.0 6.5L46.5 11.4 M50.0 6.5L44.3 4.6" stroke="#505050" stroke-width="2" fill="none"/></svg></div>
<div class="cell" style="left:657px;top:626px;height:22px">广东省广州市越秀区小石街与洪桥街交叉<span style="letter-spacing:4.5px">...</span></div>
<div class="cell" style="left:1032px;top:626px;height:22px">越秀区</div>
<div class="cell" style="left:1286px;top:625px;height:23px"><span class="mn">23.13422</span><span style="position:relative;left:-3px">，</span><span class="mn">113.269543</span></div>
<div class="a" style="left:3px;top:647px;width:1516px;height:1px;background:#f0f0f0"></div>
<div class="cell" style="left:13px;top:648px;font-size:20px;height:24px">221573</div>
<div class="cell" style="left:131px;top:650px;height:22px">万通五金水电装饰行(盘福路店)</div>
<div class="cell" style="left:435px;top:649px;width:130px;height:23px"><span class="mn">1880204</span><svg style="position:absolute;left:64px;top:7px" width="58" height="14" viewBox="0 0 58 14"><path d="M6.5 6.5L6.5 0.5 M6.5 6.5L12.2 4.6 M6.5 6.5L10.0 11.4 M6.5 6.5L3.0 11.4 M6.5 6.5L0.8 4.6 M21.0 6.5L21.0 0.5 M21.0 6.5L26.7 4.6 M21.0 6.5L24.5 11.4 M21.0 6.5L17.5 11.4 M21.0 6.5L15.3 4.6 M35.5 6.5L35.5 0.5 M35.5 6.5L41.2 4.6 M35.5 6.5L39.0 11.4 M35.5 6.5L32.0 11.4 M35.5 6.5L29.8 4.6 M50.0 6.5L50.0 0.5 M50.0 6.5L55.7 4.6 M50.0 6.5L53.5 11.4 M50.0 6.5L46.5 11.4 M50.0 6.5L44.3 4.6" stroke="#505050" stroke-width="2" fill="none"/></svg></div>
<div class="cell" style="left:657px;top:650px;height:22px">广东省广州市越秀区盘福路朱紫后街一号<span style="letter-spacing:4.5px">...</span></div>
<div class="cell" style="left:1032px;top:650px;height:22px">越秀区</div>
<div class="cell" style="left:1286px;top:649px;height:23px"><span class="mn">23.135688</span><span style="position:relative;left:-3px">，</span><span class="mn">113.259307</span></div>
<div class="a" style="left:3px;top:671px;width:1516px;height:1px;background:#f0f0f0"></div>
<div class="cell" style="left:13px;top:672px;font-size:20px;height:24px">221574</div>
<div class="cell" style="left:131px;top:674px;height:22px">福易装饰工程部(新广五路店)</div>
<div class="cell" style="left:435px;top:673px;width:130px;height:23px"><span class="mn">1354448</span><svg style="position:absolute;left:64px;top:7px" width="58" height="14" viewBox="0 0 58 14"><path d="M6.5 6.5L6.5 0.5 M6.5 6.5L12.2 4.6 M6.5 6.5L10.0 11.4 M6.5 6.5L3.0 11.4 M6.5 6.5L0.8 4.6 M21.0 6.5L21.0 0.5 M21.0 6.5L26.7 4.6 M21.0 6.5L24.5 11.4 M21.0 6.5L17.5 11.4 M21.0 6.5L15.3 4.6 M35.5 6.5L35.5 0.5 M35.5 6.5L41.2 4.6 M35.5 6.5L39.0 11.4 M35.5 6.5L32.0 11.4 M35.5 6.5L29.8 4.6 M50.0 6.5L50.0 0.5 M50.0 6.5L55.7 4.6 M50.0 6.5L53.5 11.4 M50.0 6.5L46.5 11.4 M50.0 6.5L44.3 4.6" stroke="#505050" stroke-width="2" fill="none"/></svg></div>
<div class="cell" style="left:657px;top:674px;height:22px">新广五路9号</div>
<div class="cell" style="left:1032px;top:674px;height:22px">广州市</div>
<div class="cell" style="left:1286px;top:673px;height:23px"><span class="mn">113.542357,22.704157</span><span style="position:relative;left:-3px">，</span></div>
<div class="a" style="left:3px;top:695px;width:1516px;height:1px;background:#f0f0f0"></div>
<div class="cell" style="left:13px;top:696px;font-size:20px;height:24px">221575</div>
<div class="cell" style="left:131px;top:698px;height:22px">红艺装饰工程部(朝阳东路)</div>
<div class="cell" style="left:435px;top:697px;width:130px;height:23px"><span class="mn">1354439</span><svg style="position:absolute;left:64px;top:7px" width="58" height="14" viewBox="0 0 58 14"><path d="M6.5 6.5L6.5 0.5 M6.5 6.5L12.2 4.6 M6.5 6.5L10.0 11.4 M6.5 6.5L3.0 11.4 M6.5 6.5L0.8 4.6 M21.0 6.5L21.0 0.5 M21.0 6.5L26.7 4.6 M21.0 6.5L24.5 11.4 M21.0 6.5L17.5 11.4 M21.0 6.5L15.3 4.6 M35.5 6.5L35.5 0.5 M35.5 6.5L41.2 4.6 M35.5 6.5L39.0 11.4 M35.5 6.5L32.0 11.4 M35.5 6.5L29.8 4.6 M50.0 6.5L50.0 0.5 M50.0 6.5L55.7 4.6 M50.0 6.5L53.5 11.4 M50.0 6.5L46.5 11.4 M50.0 6.5L44.3 4.6" stroke="#505050" stroke-width="2" fill="none"/></svg></div>
<div class="cell" style="left:657px;top:698px;height:22px">大石镇朝阳东路275号</div>
<div class="cell" style="left:1032px;top:698px;height:22px">广州市</div>
<div class="cell" style="left:1286px;top:697px;height:23px"><span class="mn">113.318095,23.026977</span><span style="position:relative;left:-3px">，</span></div>
<div class="a" style="left:3px;top:719px;width:1516px;height:1px;background:#f0f0f0"></div>
<div class="cell" style="left:13px;top:720px;font-size:20px;height:22px">221576</div>
<div class="cell" style="left:131px;top:722px;height:20px">鸿扬装修工程部</div>
<div class="cell" style="left:435px;top:721px;width:130px;height:21px"><span class="mn">1353514</span><svg style="position:absolute;left:64px;top:7px" width="58" height="14" viewBox="0 0 58 14"><path d="M6.5 6.5L6.5 0.5 M6.5 6.5L12.2 4.6 M6.5 6.5L10.0 11.4 M6.5 6.5L3.0 11.4 M6.5 6.5L0.8 4.6 M21.0 6.5L21.0 0.5 M21.0 6.5L26.7 4.6 M21.0 6.5L24.5 11.4 M21.0 6.5L17.5 11.4 M21.0 6.5L15.3 4.6 M35.5 6.5L35.5 0.5 M35.5 6.5L41.2 4.6 M35.5 6.5L39.0 11.4 M35.5 6.5L32.0 11.4 M35.5 6.5L29.8 4.6 M50.0 6.5L50.0 0.5 M50.0 6.5L55.7 4.6 M50.0 6.5L53.5 11.4 M50.0 6.5L46.5 11.4 M50.0 6.5L44.3 4.6" stroke="#505050" stroke-width="2" fill="none"/></svg></div>
<div class="cell" style="left:657px;top:722px;height:20px">寺右南一街6巷4号</div>
<div class="cell" style="left:1032px;top:722px;height:20px">广州市</div>
<div class="cell" style="left:1286px;top:721px;height:21px"><span class="mn">113.311893,23.116530</span><span style="position:relative;left:-3px">，</span></div>
<div class="a" style="left:122px;top:240px;width:1px;height:502px;background:#f0f0f0"></div>
<div class="a" style="left:423px;top:240px;width:1px;height:502px;background:#f0f0f0"></div>
<div class="a" style="left:648px;top:240px;width:1px;height:502px;background:#f0f0f0"></div>
<div class="a" style="left:1023px;top:240px;width:1px;height:502px;background:#f0f0f0"></div>
<div class="a" style="left:1277px;top:240px;width:1px;height:502px;background:#f0f0f0"></div>
<div class="a" style="left:1521px;top:205px;width:24px;height:537px;background:#f0f0f0"></div>
<div class="a" style="left:1521px;top:441px;width:22px;height:25px;background:#cdcdcd"></div>
<svg class="a" style="left:1526px;top:213px" width="12" height="10" viewBox="0 0 12 10"><path d="M1 8 L6 3 L11 8" fill="none" stroke="#606060" stroke-width="2.6"/></svg>
<svg class="a" style="left:1526px;top:723px" width="12" height="10" viewBox="0 0 12 10"><path d="M1 2 L6 7 L11 2" fill="none" stroke="#606060" stroke-width="2.6"/></svg>
<div class="a" style="left:3px;top:742px;width:1542px;height:24px;background:#f0f0f0"></div>
<div class="a" style="left:29px;top:743px;width:1438px;height:22px;background:#cdcdcd"></div>
<svg class="a" style="left:10px;top:747px" width="10" height="12" viewBox="0 0 10 12"><path d="M8 1 L3 6 L8 11" fill="none" stroke="#606060" stroke-width="2.6"/></svg>
<svg class="a" style="left:1502px;top:747px" width="10" height="12" viewBox="0 0 10 12"><path d="M2 1 L7 6 L2 11" fill="none" stroke="#606060" stroke-width="2.6"/></svg>
<div class="gb" style="left:2px;top:783px;width:346px;height:235px"></div>
<div class="gbl" style="left:11px;top:774px">快速添加城市</div>
<div class="gb" style="left:360px;top:783px;width:336px;height:235px"></div>
<div class="gbl" style="left:371px;top:774px">快速添加商家信息一行一条</div>
<div class="gb" style="left:696px;top:783px;width:851px;height:235px;border-left-color:#fff"></div>
<div class="gbl" style="left:707px;top:774px">采集设置</div>
<div class="a" style="left:9px;top:805px;width:315px;height:156px;background:#fff;border:1px solid #7a7a7a;box-sizing:border-box"></div>
<div class="a" style="left:11px;top:807px;width:285px;height:151px;overflow:hidden">
<div class="a" style="left:0px;top:-1px;font-size:18px;line-height:20px;letter-spacing:-1px">广州</div>
<div class="a" style="left:42px;top:1px;width:1.5px;height:18px;background:#111"></div>
<div class="a" style="left:46px;top:1px;line-height:20px"><span class="mn" style="font-size:15px;-webkit-text-stroke:0.5px #000">440100</span></div>
<div class="a" style="left:0px;top:17px;font-size:18px;line-height:20px;letter-spacing:-1px">深圳</div>
<div class="a" style="left:42px;top:19px;width:1.5px;height:18px;background:#111"></div>
<div class="a" style="left:46px;top:19px;line-height:20px"><span class="mn" style="font-size:15px;-webkit-text-stroke:0.5px #000">440300</span></div>
<div class="a" style="left:0px;top:35px;font-size:18px;line-height:20px;letter-spacing:-1px">佛山</div>
<div class="a" style="left:42px;top:37px;width:1.5px;height:18px;background:#111"></div>
<div class="a" style="left:46px;top:37px;line-height:20px"><span class="mn" style="font-size:15px;-webkit-text-stroke:0.5px #000">440600</span></div>
<div class="a" style="left:0px;top:53px;font-size:18px;line-height:20px;letter-spacing:-1px">郑州</div>
<div class="a" style="left:42px;top:55px;width:1.5px;height:18px;background:#111"></div>
<div class="a" style="left:46px;top:55px;line-height:20px"><span class="mn" style="font-size:15px;-webkit-text-stroke:0.5px #000">410100</span></div>
<div class="a" style="left:0px;top:71px;font-size:18px;line-height:20px;letter-spacing:-1px">成都</div>
<div class="a" style="left:42px;top:73px;width:1.5px;height:18px;background:#111"></div>
<div class="a" style="left:46px;top:73px;line-height:20px"><span class="mn" style="font-size:15px;-webkit-text-stroke:0.5px #000">510100</span></div>
<div class="a" style="left:0px;top:89px;font-size:18px;line-height:20px;letter-spacing:-1px">天津市</div>
<div class="a" style="left:59px;top:91px;width:1.5px;height:18px;background:#111"></div>
<div class="a" style="left:63px;top:91px;line-height:20px"><span class="mn" style="font-size:15px;-webkit-text-stroke:0.5px #000">120100</span></div>
<div class="a" style="left:0px;top:107px;font-size:18px;line-height:20px;letter-spacing:-1px">北京市</div>
<div class="a" style="left:59px;top:109px;width:1.5px;height:18px;background:#111"></div>
<div class="a" style="left:63px;top:109px;line-height:20px"><span class="mn" style="font-size:15px;-webkit-text-stroke:0.5px #000">110000</span></div>
<div class="a" style="left:0px;top:125px;font-size:18px;line-height:20px;letter-spacing:-1px">上海</div>
<div class="a" style="left:42px;top:127px;width:1.5px;height:18px;background:#111"></div>
<div class="a" style="left:46px;top:127px;line-height:20px"><span class="mn" style="font-size:15px;-webkit-text-stroke:0.5px #000">310000</span></div>
<div class="a" style="left:0px;top:143px;font-size:18px;line-height:20px;letter-spacing:-1px">南京</div>
<div class="a" style="left:42px;top:145px;width:1.5px;height:18px;background:#111"></div>
<div class="a" style="left:46px;top:145px;line-height:20px"><span class="mn" style="font-size:15px;-webkit-text-stroke:0.5px #000">320100</span></div>
</div>
<div class="a" style="left:297px;top:808px;width:23px;height:150px;background:#f0f0f0"></div>
<div class="a" style="left:297px;top:834px;width:22px;height:56px;background:#cdcdcd"></div>
<svg class="a" style="left:302px;top:817px" width="12" height="10" viewBox="0 0 12 10"><path d="M1 8 L6 3 L11 8" fill="none" stroke="#606060" stroke-width="2.6"/></svg>
<svg class="a" style="left:302px;top:941px" width="12" height="10" viewBox="0 0 12 10"><path d="M1 2 L6 7 L11 2" fill="none" stroke="#606060" stroke-width="2.6"/></svg>
<div class="btn" style="left:21px;top:966px;width:285px;height:44px;padding-top:2px">快速添加城市名称</div>
<div class="a" style="left:369px;top:808px;width:315px;height:202px;background:#fff;border:1px solid #7a7a7a;box-sizing:border-box"></div>
<div class="a" style="left:371px;top:810px;width:285px;height:198px;overflow:hidden">
<div class="a" style="left:0px;top:-2.0px;font-size:20px;line-height:20px;letter-spacing:-2px">建材</div>
<div class="a" style="left:0px;top:15.7px;font-size:20px;line-height:20px;letter-spacing:-2px">手机</div>
<div class="a" style="left:0px;top:33.4px;font-size:20px;line-height:20px;letter-spacing:-2px">装修</div>
<div class="a" style="left:0px;top:51.099999999999994px;font-size:20px;line-height:20px;letter-spacing:-2px">金融</div>
<div class="a" style="left:0px;top:68.8px;font-size:20px;line-height:20px;letter-spacing:-2px">物流</div>
<div class="a" style="left:0px;top:86.5px;font-size:20px;line-height:20px;letter-spacing:-2px">投资</div>
<div class="a" style="left:0px;top:104.19999999999999px;font-size:20px;line-height:20px;letter-spacing:-2px">证卷</div>
<div class="a" style="left:0px;top:121.89999999999999px;font-size:20px;line-height:20px;letter-spacing:-2px">银行</div>
<div class="a" style="left:0px;top:139.6px;font-size:20px;line-height:20px;letter-spacing:-2px">贷款</div>
<div class="a" style="left:0px;top:157.29999999999998px;font-size:20px;line-height:20px;letter-spacing:-2px">二手车</div>
<div class="a" style="left:0px;top:175.0px;font-size:20px;line-height:20px;letter-spacing:-2px">手机</div>
</div>
<div class="a" style="left:657px;top:811px;width:23px;height:196px;background:#f0f0f0"></div>
<div class="a" style="left:657px;top:836px;width:22px;height:92px;background:#cdcdcd"></div>
<svg class="a" style="left:662px;top:819px" width="12" height="10" viewBox="0 0 12 10"><path d="M1 8 L6 3 L11 8" fill="none" stroke="#606060" stroke-width="2.6"/></svg>
<svg class="a" style="left:662px;top:989px" width="12" height="10" viewBox="0 0 12 10"><path d="M1 2 L6 7 L11 2" fill="none" stroke="#606060" stroke-width="2.6"/></svg>
<div class="btn" style="left:722px;top:810px;width:148px;height:124px;padding-top:4px">开始采集</div>
<div class="btn" style="left:888px;top:809px;width:117px;height:52px;padding-top:3px">停止采集</div>
<div class="btn" style="left:888px;top:882px;width:117px;height:47px;padding-top:4px">清空数据</div>
<div class="btn" style="left:722px;top:940px;width:284px;height:69px;padding-top:3px">密钥<span class="mono" style="font-size:15px">key</span>配置（参数配置）</div>
<div class="btn" style="left:1046px;top:811px;width:121px;height:47px;padding-top:3px">导出<span class="mono" style="font-size:15px;font-weight:bold">Excel</span></div>
<div class="btn" style="left:1046px;top:880px;width:116px;height:44px;padding-top:4px">导出手机号</div>
<div class="btn" style="left:1201px;top:811px;width:126px;height:46px;padding-top:3px">导出<span class="mono" style="font-size:15px;font-weight:bold">txt</span></div>
<div class="btn" style="left:1370px;top:813px;width:125px;height:44px;padding-top:2px">导出<span class="mono" style="font-size:15px;font-weight:bold">VCF</span></div>
<div class="cb" style="left:1202px;top:892px;width:19px;height:19px;box-sizing:border-box;border:1.2px solid #333;background:#fff"></div><svg class="a" style="left:1202px;top:892px" width="19" height="19" viewBox="0 0 19 19"><path d="M3 9.2 L7 13.3 L15.5 4.6" fill="none" stroke="#4a4a4a" stroke-width="2"/></svg>
<div class="a" style="left:1225px;top:890px;font-size:19px;line-height:24px">过滤座机号码</div>
<div class="cb" style="left:1370px;top:889px;width:19px;height:19px;box-sizing:border-box;border:1.2px solid #333;background:#fff"></div><svg class="a" style="left:1370px;top:889px" width="19" height="19" viewBox="0 0 19 19"><path d="M3 9.2 L7 13.3 L15.5 4.6" fill="none" stroke="#4a4a4a" stroke-width="2"/></svg>
<div class="a" style="left:1393px;top:887px;font-size:19px;line-height:24px">过滤重复数据</div>
<div class="a" style="left:1097px;top:952px;font-size:25px;line-height:30px;font-weight:bold;transform:scaleY(1.08);transform-origin:0 0">采集条数共计<span style="display:inline-block;width:12px;position:relative;top:2px;left:-1px">：</span></div>
<div class="a" style="left:1267px;top:952px;font-size:31px;line-height:36px;font-weight:bold;color:#f04444;white-space:nowrap"><span style="display:inline-block;transform:scaleX(0.94);transform-origin:0 0;width:101px;font-size:32px">523176</span><span style="font-size:30px;position:relative;top:1px">条</span></div>
<div class="a" style="left:0;top:1023px;width:1550px;height:3px;background:linear-gradient(#f0f0f0 0,#f0f0f0 0.5px,#34495c 0.5px,#34495c 1.5px,#3f8fc4 1.5px)"></div>
</body></html>
